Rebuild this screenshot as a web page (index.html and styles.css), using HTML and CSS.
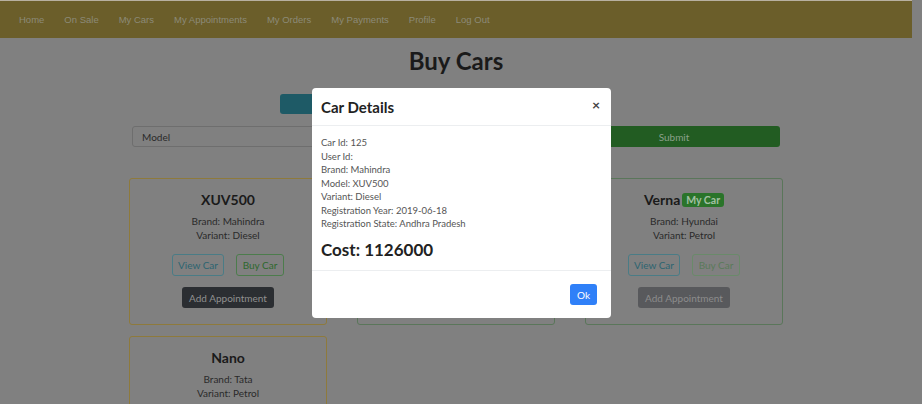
FILE: index.html
```html
<!DOCTYPE html>
<html lang="en">
<head>
<meta charset="utf-8">
<title>Buy Cars</title>
<link rel="stylesheet" href="styles.css">
</head>
<body>
<div class="page">
  <nav class="navbar">
    <a class="nav-link" href="#">Home</a>
    <a class="nav-link" href="#">On Sale</a>
    <a class="nav-link" href="#">My Cars</a>
    <a class="nav-link" href="#">My Appointments</a>
    <a class="nav-link" href="#">My Orders</a>
    <a class="nav-link" href="#">My Payments</a>
    <a class="nav-link" href="#">Profile</a>
    <a class="nav-link" href="#">Log Out</a>
  </nav>

  <h1 class="title">Buy Cars</h1>

  <div class="toggle-row">
    <button class="btn-toggle">Search</button>
  </div>

  <form class="search-row">
    <input class="search-input" type="text" placeholder="Model">
    <button class="btn-submit" type="button">Submit</button>
  </form>

  <div class="grid">
    <div class="col">
      <div class="card card-warning">
        <h2 class="card-title">XUV500</h2>
        <p class="card-text">Brand: Mahindra</p>
        <p class="card-text">Variant: Diesel</p>
        <div class="btn-row">
          <button class="btn btn-outline-info">View Car</button>
          <button class="btn btn-outline-success">Buy Car</button>
        </div>
        <button class="btn btn-dark">Add Appointment</button>
      </div>
    </div>
    <div class="col">
      <div class="card card-success">
        <h2 class="card-title">Swift</h2>
        <p class="card-text">Brand: Maruti</p>
        <p class="card-text">Variant: Petrol</p>
        <div class="btn-row">
          <button class="btn btn-outline-info">View Car</button>
          <button class="btn btn-outline-success">Buy Car</button>
        </div>
        <button class="btn btn-dark">Add Appointment</button>
      </div>
    </div>
    <div class="col">
      <div class="card card-success">
        <h2 class="card-title">Verna<span class="badge">My Car</span></h2>
        <p class="card-text">Brand: Hyundai</p>
        <p class="card-text">Variant: Petrol</p>
        <div class="btn-row">
          <button class="btn btn-outline-info">View Car</button>
          <button class="btn btn-outline-success disabled">Buy Car</button>
        </div>
        <button class="btn btn-dark disabled">Add Appointment</button>
      </div>
    </div>
    <div class="col">
      <div class="card card-warning">
        <h2 class="card-title">Nano</h2>
        <p class="card-text">Brand: Tata</p>
        <p class="card-text">Variant: Petrol</p>
      </div>
    </div>
  </div>
</div>

<div class="modal">
  <div class="modal-header">
    <h3 class="modal-title">Car Details</h3>
    <span class="close">&times;</span>
  </div>
  <div class="modal-body">
    <p class="detail">Car Id: 125</p>
    <p class="detail">User Id:</p>
    <p class="detail">Brand: Mahindra</p>
    <p class="detail">Model: XUV500</p>
    <p class="detail">Variant: Diesel</p>
    <p class="detail">Registration Year: 2019-06-18</p>
    <p class="detail">Registration State: Andhra Pradesh</p>
    <h4 class="cost">Cost: 1126000</h4>
  </div>
  <div class="modal-footer">
    <button class="btn-ok">Ok</button>
  </div>
</div>
</body>
</html>
```

FILE: styles.css
```css
/* Colours below are the page as seen through the modal's dimmed backdrop */
* { box-sizing: border-box; }

html, body {
  margin: 0;
  padding: 0;
  background: #808080;
  height: 404px;
  overflow: hidden;
}

body {
  font-family: Lato, "Open Sans", sans-serif;
  color: #2a2a2a;
  position: relative;
}

.page {
  width: 912px;
  padding-top: 1px;
}

.navbar {
  height: 37px;
  background: #6b5e2a;
  display: flex;
  align-items: center;
  padding-left: 9px;
  box-shadow: 0 -1px 0 #b8b0a0;
}

.nav-link {
  font-family: "Liberation Sans", Arial, sans-serif;
  font-size: 9.5px;
  color: #8c8a78;
  text-decoration: none;
  padding: 0 10px;
}

.title {
  margin: 8px 0 0;
  text-align: center;
  font-size: 24px;
  font-weight: 700;
  color: #1a1a1a;
  line-height: 30px;
}

.toggle-row {
  display: flex;
  padding-left: 280px;
  margin-top: 18px;
}

.btn-toggle {
  width: 120px;
  height: 20px;
  border: none;
  border-radius: 3px;
  background: #1e5a66;
  color: #8a9a9c;
  font: 10px Lato, sans-serif;
}

.search-row {
  display: flex;
  gap: 12px;
  margin: 12px 0 0;
  padding-left: 132px;
}

.search-input {
  width: 424px;
  height: 21px;
  border: 1px solid #6e6e6e;
  border-radius: 3px;
  padding: 0 9px;
  background: #808080;
  font: 10px Lato, sans-serif;
  color: #2a2a2a;
}

.search-input::placeholder { color: #2a2a2a; }

.btn-submit {
  width: 212px;
  height: 21px;
  border: none;
  border-radius: 3px;
  background: #225c22;
  color: #8aa08a;
  font: 10px Lato, sans-serif;
}

.grid {
  display: grid;
  grid-template-columns: repeat(3, 228px);
  width: 684px;
  margin: 31px auto 0;
  row-gap: 11px;
}

.col {
  padding: 0 15px;
}

.card {
  border: 1px solid;
  border-radius: 3px;
  height: 147px;
  display: flex;
  flex-direction: column;
  align-items: center;
  padding-top: 12px;
}

.card-warning { border-color: #8e7a3c; }
.card-success { border-color: #5a765a; }

.card-title {
  margin: 0 0 6px;
  font-size: 14px;
  font-weight: 700;
  color: #1a1a1a;
  line-height: 18px;
  display: flex;
  align-items: center;
}

.badge {
  margin-left: 2px;
  background: #2a742a;
  color: #a2c0a2;
  font-size: 10.5px;
  font-weight: 700;
  padding: 0 4px;
  border-radius: 3px;
  line-height: 14px;
}

.card-text {
  margin: 0;
  font-size: 10px;
  line-height: 13.5px;
  color: #2a2a2a;
}

.btn-row {
  display: flex;
  gap: 12px;
  margin-top: 12px;
}

.btn {
  height: 22px;
  border-radius: 3px;
  font: 10px Lato, sans-serif;
  padding: 0;
  background: transparent;
  white-space: nowrap;
}

.btn-outline-info { border: 1px solid #4a7c86; color: #2c6470; width: 52px; }
.btn-outline-success { border: 1px solid #4c7c4c; color: #2e682e; width: 48px; }

.btn-dark {
  margin-top: 11px;
  width: 92px;
  height: 21px;
  border: none;
  background: #2b2e32;
  color: #909090;
}

.btn-outline-success.disabled { border-color: #6a8a6a; color: #5a7a5a; }
.btn-dark.disabled { background: #58595c; color: #8c8c8c; }

.modal {
  position: absolute;
  z-index: 20;
  left: 312px;
  top: 88px;
  width: 299px;
  height: 230px;
  background: #fff;
  border-radius: 4px;
  display: flex;
  flex-direction: column;
}

.modal-header {
  height: 38px;
  border-bottom: 1px solid #eceef0;
  display: flex;
  align-items: center;
  justify-content: space-between;
  padding: 0 9px;
}

.modal-title {
  margin: 0;
  font-size: 15px;
  font-weight: 700;
  color: #222;
}

.close {
  font-size: 14px;
  color: #444;
  font-weight: 700;
  margin: -4px 2px 0 0;
}

.modal-body {
  padding: 10px 9px 0;
  height: 145px;
  border-bottom: 1px solid #eceef0;
}

.detail {
  margin: 0;
  font-size: 9.5px;
  line-height: 13.5px;
  color: #555;
}

.cost {
  margin: 8px 0 0;
  font-size: 17px;
  font-weight: 700;
  color: #222;
}

.modal-footer {
  flex: 1;
  display: flex;
  align-items: center;
  justify-content: flex-end;
  padding: 0 14px;
}

.btn-ok {
  width: 27px;
  height: 21px;
  border: none;
  border-radius: 3px;
  background: #2f80f8;
  color: #fff;
  font: 10px Lato, sans-serif;
  padding: 0;
}
```
